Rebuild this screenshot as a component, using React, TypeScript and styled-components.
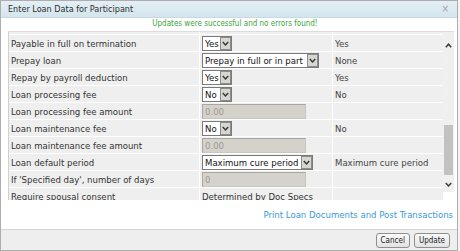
import React, {useLayoutEffect, useRef} from "react";
import styled, {createGlobalStyle} from "styled-components";

const GlobalStyle = createGlobalStyle`
  html, body {
    margin: 0;
    padding: 0;
    background: #f4f4f4;
  }
  body {
    font-family: "DejaVu Sans Condensed", "Liberation Sans", Arial, sans-serif;
    color: #333;
  }
`;

const Dialog = styled.div`
  width: 458px;
  height: 251px;
  box-sizing: border-box;
  border: 1px solid #adadad;
  background: #fff;
  display: flex;
  flex-direction: column;
`;

const TitleBar = styled.div`
  height: 16px;
  border-bottom: 1px solid #c8d8e1;
  background: linear-gradient(#e4eff5, #d4e5ee);
  display: flex;
  align-items: center;
  justify-content: space-between;
  padding: 0 8px 0 7px;
  font-size: 9px;
  color: #2e2e2e;
`;

const Close = styled.span`
  color: #a3a3a3;
  font-size: 10px;
  line-height: 1;
`;

const Message = styled.div`
  height: 13px;
  line-height: 12px;
  text-align: center;
  padding-left: 12px;
  font-size: 8px;
  color: #3da53d;
`;

const Body = styled.div`
  height: 169px;
  box-sizing: border-box;
  margin: 0 3px 0 7px;
  border-top: 1px solid #dcdcdc;
  border-left: 1px solid #d0d0d0;
  display: flex;
`;

const Viewport = styled.div`
  flex: 1;
  overflow: hidden;
`;

const Row = styled.div`
  display: grid;
  grid-template-columns: 190px 132px 1fr;
  column-gap: 1px;
  margin-bottom: 1px;
`;

const Cell = styled.div<{ $tone?: string }>`
  height: 16px;
  background: #efefef;
  display: flex;
  align-items: center;
  padding-left: 2px;
  font-size: 9.5px;
  color: ${p => p.$tone ?? "#333"};
  white-space: nowrap;
  overflow: hidden;
`;

const SelectBox = styled.div<{ $width: number }>`
  width: ${p => p.$width}px;
  height: 15px;
  box-sizing: border-box;
  border: 1px solid #7a7a7a;
  background: #fff;
  display: flex;
  align-items: stretch;
  font-size: 9.5px;
  color: #111;
`;

const SelectText = styled.span`
  flex: 1;
  padding-left: 2px;
  line-height: 13px;
  overflow: hidden;
`;

const SelectButton = styled.span`
  width: 11px;
  box-sizing: border-box;
  border: 1px solid #8c8c8c;
  background: #d8d6d1;
  display: flex;
  align-items: center;
  justify-content: center;
`;

const DisabledInput = styled.div`
  width: 104px;
  height: 15px;
  box-sizing: border-box;
  border: 1px solid #a9a6a0;
  border-bottom-color: #c9c6c0;
  border-right-color: #c9c6c0;
  background: #d5d2cb;
  padding-left: 2px;
  line-height: 13px;
  font-size: 9.5px;
  color: #9d9991;
`;

const Scrollbar = styled.div`
  width: 11px;
  height: 160px;
  background: #f0f0f0;
  display: flex;
  flex-direction: column;
`;

const Arrow = styled.div<{ $h: number }>`
  height: ${p => p.$h}px;
  display: flex;
  align-items: center;
  justify-content: center;
`;

const Track = styled.div`
  flex: 1;
`;

const Thumb = styled.div<{ $top: number; $size: number }>`
  margin: ${p => p.$top}px 1px 0 1px;
  height: ${p => p.$size}px;
  background: #c2c2c2;
`;

const LinkRow = styled.div`
  height: 29px;
  display: flex;
  align-items: center;
  justify-content: flex-end;
  padding-right: 4px;
`;

const Link = styled.a`
  font-size: 9.5px;
  color: #3a9ad8;
  text-decoration: none;
`;

const ButtonBar = styled.div`
  height: 20px;
  border-top: 1px solid #d4d4d4;
  background: #eeeeee;
  display: flex;
  align-items: center;
  justify-content: flex-end;
  gap: 4px;
  padding-right: 7px;
`;

const Button = styled.button`
  height: 15px;
  padding: 0 4px;
  border: 1px solid #8f8f8f;
  border-radius: 3px;
  background: linear-gradient(#fbfbfb, #e2e2e2);
  font-family: inherit;
  font-size: 8px;
  color: #222;
  line-height: 13px;
`;

const Chevron = ({up = false}: { up?: boolean }) => (
  <svg width="7" height="5" viewBox="0 0 7 5">
    <path d={up ? "M0.8 4.2 L3.5 1.2 L6.2 4.2" : "M0.8 0.9 L3.5 3.9 L6.2 0.9"}
          fill="none" stroke="#3a3a3a" strokeWidth="1.5"/>
  </svg>
);

type Control =
  | { kind: "select"; value: string; width: number }
  | { kind: "input"; value: string }
  | { kind: "text"; value: string };

interface LoanRow {
  label: string;
  control: Control;
  current: string;
}

const yesNo = (value: string): Control => ({kind: "select", value, width: 30});

// first entry is the row scrolled almost out of view above the list
const rows: LoanRow[] = [
  {label: "", control: {kind: "text", value: ""}, current: ""},
  {label: "Payable in full on termination", control: yesNo("Yes"), current: "Yes"},
  {label: "Prepay loan", control: {kind: "select", value: "Prepay in full or in part", width: 117}, current: "None"},
  {label: "Repay by payroll deduction", control: yesNo("Yes"), current: "Yes"},
  {label: "Loan processing fee", control: yesNo("No"), current: "No"},
  {label: "Loan processing fee amount", control: {kind: "input", value: "0.00"}, current: ""},
  {label: "Loan maintenance fee", control: yesNo("No"), current: "No"},
  {label: "Loan maintenance fee amount", control: {kind: "input", value: "0.00"}, current: ""},
  {label: "Loan default period", control: {kind: "select", value: "Maximum cure period", width: 111}, current: "Maximum cure period"},
  {label: "If 'Specified day', number of days", control: {kind: "input", value: "0"}, current: ""},
  {label: "Require spousal consent", control: {kind: "text", value: "Determined by Doc Specs"}, current: ""},
];

const renderControl = (c: Control) => {
  if (c.kind === "select") {
    return (
      <SelectBox $width={c.width}>
        <SelectText>{c.value}</SelectText>
        <SelectButton><Chevron/></SelectButton>
      </SelectBox>
    );
  }
  if (c.kind === "input") return <DisabledInput>{c.value}</DisabledInput>;
  return c.value;
};

export default function App() {
  const viewRef = useRef<HTMLDivElement>(null);

  useLayoutEffect(() => {
    // scrolled so that "Payable in full on termination" is the first full row
    if (viewRef.current) viewRef.current.scrollTop = 17 - 3;
  }, []);

  return (
    <>
      <GlobalStyle/>
      <Dialog>
        <TitleBar>
          <span>Enter Loan Data for Participant</span>
          <Close>×</Close>
        </TitleBar>
        <Message>Updates were successful and no errors found!</Message>
        <Body>
          <Viewport ref={viewRef}>
            {rows.map((r, i) => (
              <Row key={i}>
                <Cell>{r.label}</Cell>
                <Cell>{renderControl(r.control)}</Cell>
                <Cell $tone="#444">{r.current}</Cell>
              </Row>
            ))}
          </Viewport>
          <Scrollbar>
            <Arrow $h={26}><Chevron up/></Arrow>
            <Track>
              <Thumb $top={67} $size={50}/>
            </Track>
            <Arrow $h={16}><Chevron/></Arrow>
          </Scrollbar>
        </Body>
        <LinkRow>
          <Link href="#">Print Loan Documents and Post Transactions</Link>
        </LinkRow>
        <ButtonBar>
          <Button>Cancel</Button>
          <Button>Update</Button>
        </ButtonBar>
      </Dialog>
    </>
  );
}
